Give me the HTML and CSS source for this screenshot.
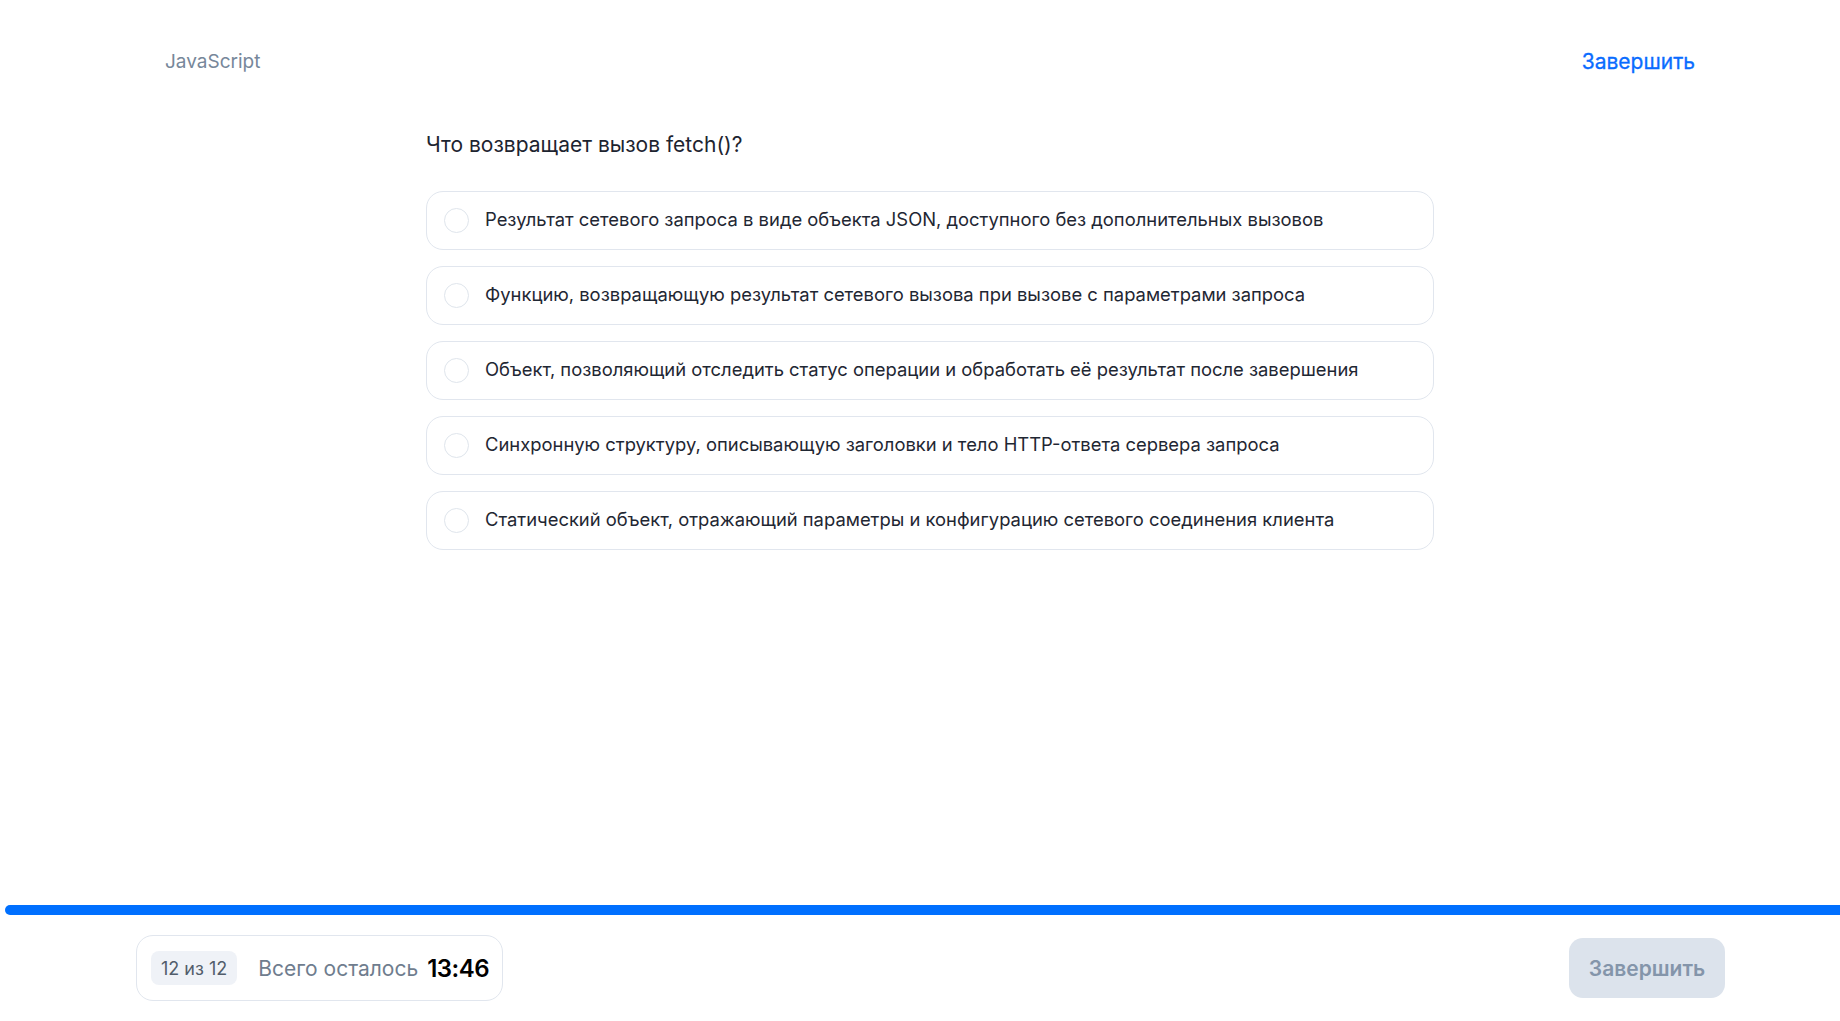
FILE: index.html
```html
<!DOCTYPE html>
<html lang="ru">
<head>
<meta charset="utf-8">
<title>JavaScript — тест</title>
<link rel="stylesheet" href="styles.css">
</head>
<body>
<div class="page">
  <header class="header">
    <span class="topic">JavaScript</span>
    <a class="finish-link" href="#">Завершить</a>
  </header>
  <main class="main">
    <h1 class="question">Что возвращает вызов fetch()?</h1>
    <ul class="options">
      <li class="option"><span class="radio"></span><span class="option-text">Результат сетевого запроса в виде объекта JSON, доступного без дополнительных вызовов</span></li>
      <li class="option"><span class="radio"></span><span class="option-text">Функцию, возвращающую результат сетевого вызова при вызове с параметрами запроса</span></li>
      <li class="option"><span class="radio"></span><span class="option-text">Объект, позволяющий отследить статус операции и обработать её результат после завершения</span></li>
      <li class="option"><span class="radio"></span><span class="option-text">Синхронную структуру, описывающую заголовки и тело HTTP-ответа сервера запроса</span></li>
      <li class="option"><span class="radio"></span><span class="option-text">Статический объект, отражающий параметры и конфигурацию сетевого соединения клиента</span></li>
    </ul>
  </main>
  <div class="progress"><div class="progress-fill"></div></div>
  <footer class="footer">
    <div class="status">
      <span class="counter">12 из 12</span>
      <span class="remaining">Всего осталось</span>
      <span class="timer">13:46</span>
    </div>
    <button class="finish-btn" type="button">Завершить</button>
  </footer>
</div>
</body>
</html>
```
FILE: styles.css
```css
* { box-sizing: border-box; }
html, body { margin: 0; padding: 0; background: #fff; }
body {
  font-family: Inter, "Noto Sans", "Liberation Sans", sans-serif;
  color: #1f2630;
}
.page {
  height: 1021px;
  display: flex;
  flex-direction: column;
}
.header {
  display: flex;
  justify-content: space-between;
  align-items: center;
  padding: 44px 145px 0 165px;
  height: 80px;
}
.topic {
  font-size: 19px;
  line-height: 38px;
  color: #77879a;
}
.finish-link {
  font-size: 21px;
  line-height: 38px;
  color: #0a6cff;
  text-decoration: none;
  font-weight: 400;
  -webkit-text-stroke: 0.3px #0a6cff;
}
.main {
  flex: 1;
  margin-left: 426px;
  width: 1008px;
}
.question {
  margin: 51px 0 32px 0;
  font-size: 21px;
  line-height: 28px;
  font-weight: 400;
  color: #1d2430;
}
.options {
  list-style: none;
  margin: 0;
  padding: 0;
  display: flex;
  flex-direction: column;
  gap: 16px;
}
.option {
  height: 59px;
  border: 1px solid #e1e6ee;
  border-radius: 17px;
  display: flex;
  align-items: center;
  padding-left: 17px;
  padding-bottom: 3px;
  gap: 16px;
}
.radio {
  width: 25px;
  height: 25px;
  border: 1.5px solid #dfe5ec;
  border-radius: 50%;
  flex: none;
  margin-top: 3px;
}
.option-text {
  font-size: 18.4px;
  color: #1f2733;
}
.progress {
  height: 10px;
  margin-left: 5px;
}
.progress-fill {
  height: 100%;
  background: #0070ff;
  border-radius: 5px 0 0 5px;
}
.footer {
  display: flex;
  justify-content: space-between;
  align-items: center;
  padding: 20px 115px 20px 136px;
}
.status {
  height: 66px;
  border: 1px solid #e1e6ee;
  border-radius: 17px;
  display: flex;
  align-items: center;
  padding: 0 10px 0 14px;
  width: 367px;
  white-space: nowrap;
}
.counter {
  background: #eff2f7;
  border-radius: 8px;
  height: 34px;
  padding: 0 10px;
  display: flex;
  align-items: center;
  font-size: 18px;
  color: #525d6b;
  flex: none;
}
.remaining {
  margin-left: 21px;
  font-size: 21px;
  color: #6f7d8e;
  flex: none;
}
.timer {
  margin-left: 9px;
  font-size: 24px;
  font-weight: 600;
  color: #000;
  letter-spacing: -0.5px;
  flex: none;
}
.finish-btn {
  width: 156px;
  height: 60px;
  border: 0;
  border-radius: 14px;
  background: #dce3ec;
  color: #8495aa;
  font-family: inherit;
  font-size: 21px;
  font-weight: 600;
}
```
